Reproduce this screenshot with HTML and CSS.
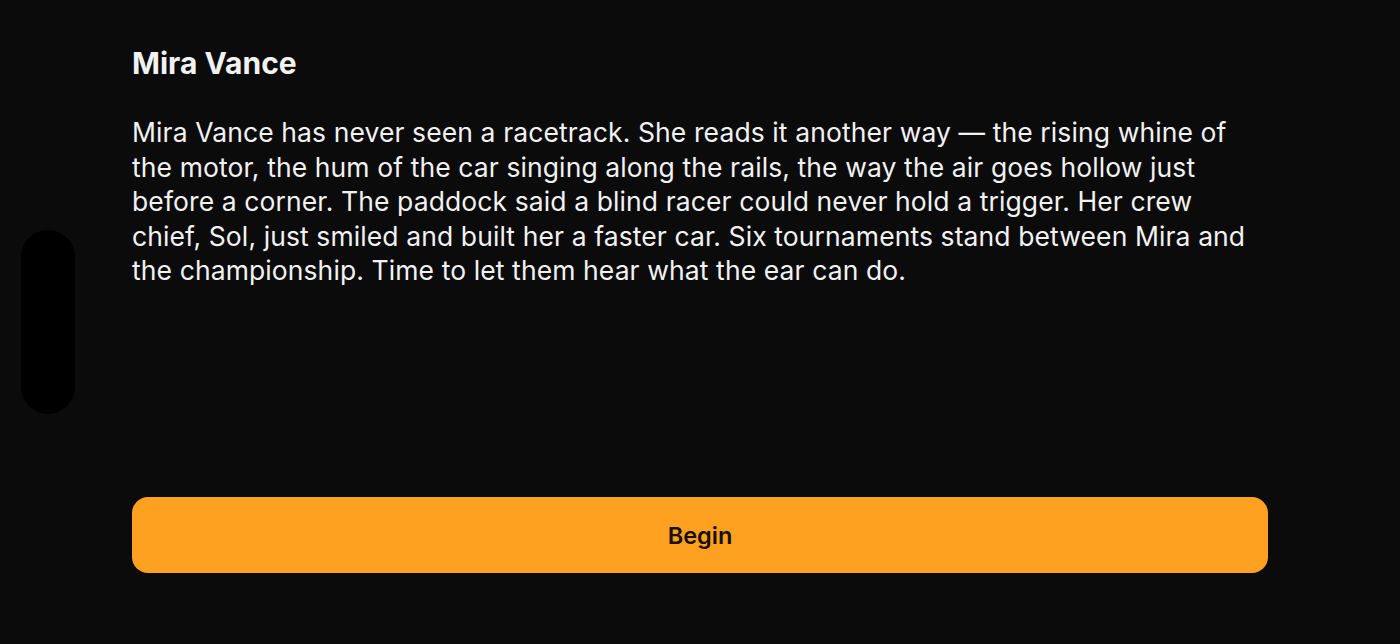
FILE: index.html
```html
<!DOCTYPE html>
<html lang="en">
<head>
<meta charset="utf-8">
<title>Mira Vance</title>
<link rel="stylesheet" href="styles.css">
</head>
<body>
<div class="island"></div>
<main class="screen">
  <h1 class="title">Mira Vance</h1>
  <p class="story">Mira Vance has never seen a racetrack. She reads it another way — the rising whine of<br>the motor, the hum of the car singing along the rails, the way the air goes hollow just<br>before a corner. The paddock said a blind racer could never hold a trigger. Her crew<br>chief, Sol, just smiled and built her a faster car. Six tournaments stand between Mira and<br>the championship. Time to let them hear what the ear can do.</p>
  <div class="spacer"></div>
  <button class="begin">Begin</button>
</main>
</body>
</html>
```
FILE: styles.css
```css
html, body {
  margin: 0;
  padding: 0;
  background: #0b0b0b;
  height: 100%;
}
body {
  font-family: Inter, "Noto Sans", sans-serif;
  color: #f2f2f2;
  overflow: hidden;
}
.island {
  position: absolute;
  left: 21px;
  top: 230px;
  width: 54px;
  height: 184px;
  border-radius: 27px;
  background: #000;
}
.screen {
  box-sizing: border-box;
  height: 644px;
  padding: 45px 132px 71px 132px;
  display: flex;
  flex-direction: column;
}
.title {
  margin: 0;
  font-size: 30px;
  line-height: 36px;
  font-weight: 700;
  letter-spacing: 0;
}
.story {
  margin: 34px 0 0 0;
  font-size: 26.5px;
  line-height: 34.5px;
  font-weight: 400;
  white-space: nowrap;
  letter-spacing: 0.1px;
}
.spacer {
  flex: 1;
}
.begin {
  height: 76px;
  width: 100%;
  border: none;
  border-radius: 16px;
  background: #fea020;
  color: #161006;
  font-family: Inter, "Noto Sans", sans-serif;
  font-size: 23.5px;
  font-weight: 600;
  letter-spacing: 0;
}
```
